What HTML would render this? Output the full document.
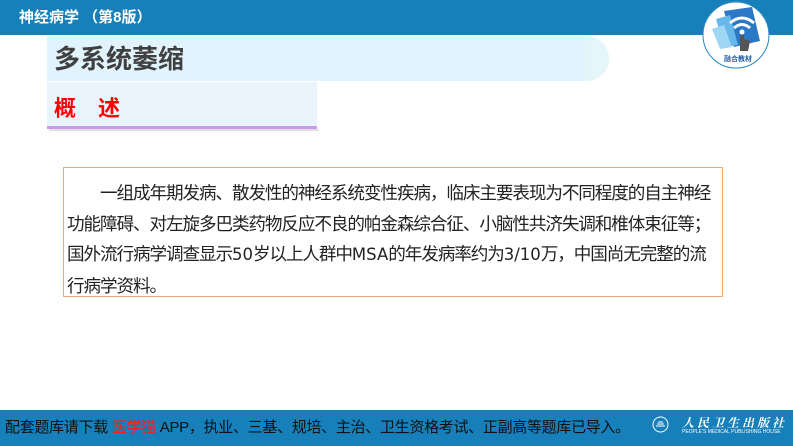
<!DOCTYPE html>
<html><head><meta charset="utf-8"><style>
*{margin:0;padding:0;box-sizing:border-box}
body{width:793px;height:446px;position:relative;background:#fff;overflow:hidden;font-family:"Liberation Sans","Noto Sans CJK SC",sans-serif}
.hdr{position:absolute;left:0;top:0;width:793px;height:35px;background:#177fb9;color:#fff;font-weight:bold;font-size:15px;line-height:35px;padding-left:19px}
.tbar{position:absolute;left:47px;top:36px;width:538px;height:45px;background:#e1f4fd}
.tcap{position:absolute;left:585px;top:36px;width:24px;height:45px;border-radius:0 24px 24px 0;background:#e4f6fa}
.ttl{position:absolute;left:54px;top:38px;font-size:26px;font-weight:bold;color:#404040;line-height:42px}
.sbox{position:absolute;left:47px;top:82px;width:270px;height:44px;background:#eaf4fd}
.sline{position:absolute;left:47px;top:126px;width:270px;height:3px;background:#cc99ee}
.sshadow{position:absolute;left:49px;top:129px;width:270px;height:2px;background:#e0e0e0}
.stt{position:absolute;left:54px;top:94px;font-size:22px;font-weight:bold;color:#ff0000;letter-spacing:22px;line-height:30px}
.box{position:absolute;left:63px;top:167px;width:660px;height:130px;border:1px solid #f2a878}
.txt{position:absolute;left:67px;top:178px;font-size:17.6px;line-height:30.5px;color:#222;white-space:nowrap;letter-spacing:-1.1px}
.txt span{font-family:"DejaVu Sans",sans-serif;font-size:16.5px;letter-spacing:0}
.foot{position:absolute;left:0;top:410px;width:793px;height:36px;background:#177fb9}
.ft{position:absolute;left:5px;top:418px;font-size:15px;color:#111;line-height:20px;letter-spacing:-0.3px}
.ft span{color:#ff1a1a}
.pub{position:absolute;left:682px;top:414px;color:#fff;font-size:12px;font-weight:bold;font-style:italic;letter-spacing:3px;font-family:"Noto Serif CJK SC",serif}
.pube{position:absolute;left:682px;top:429px;color:#fff;font-size:5px;white-space:nowrap}
</style></head><body>
<div class="hdr">神经病学 （第8版）</div>
<svg style="position:absolute;left:702px;top:1px" width="68" height="68" viewBox="0 0 68 68">
<circle cx="34" cy="34" r="33" fill="#fff" stroke="#2a8ac4" stroke-width="1"/>
<polygon points="22,10 50,6 58,40 32,46" fill="#2a78c6"/>
<polygon points="14,18 28,14 36,44 22,46" fill="#66b7ea"/>
<polygon points="10,28 22,24 30,46 18,48" fill="#9fd6f4"/>
<path d="M28 22 Q40 12 52 22" stroke="#fff" stroke-width="3" fill="none"/>
<path d="M32 27 Q40 20 48 27" stroke="#fff" stroke-width="3" fill="none"/>
<circle cx="40" cy="31" r="2.5" fill="#fff"/>
<path d="M38 34 L38 50 L46 50 L48 40 L42 38 L42 34 Z" fill="#555"/>
<text x="22" y="60" font-size="7" font-weight="bold" fill="#1a5fa8" font-family="Noto Sans CJK SC,sans-serif">融合教材</text>
</svg>
<div class="tbar"></div><div class="tcap"></div>
<div class="ttl">多系统萎缩</div>
<div class="sbox"></div><div class="sline"></div><div class="sshadow"></div>
<div class="stt">概述</div>
<div class="box"></div>
<div class="txt">　　一组成年期发病、散发性的神经系统变性疾病，临床主要表现为不同程度的自主神经<br>功能障碍、对左旋多巴类药物反应不良的帕金森综合征、小脑性共济失调和椎体束征等；<br>国外流行病学调查显示<span>50</span>岁以上人群中<span>MSA</span>的年发病率约为<span>3/10</span>万，中国尚无完整的流<br>行病学资料。</div>
<div class="foot"></div>
<div class="ft">配套题库请下载 <span>医学猫</span> APP，执业、三基、规培、主治、卫生资格考试、正副高等题库已导入。</div>
<svg style="position:absolute;left:652px;top:416px" width="17" height="17" viewBox="0 0 17 17"><circle cx="8.5" cy="8.5" r="7.5" fill="none" stroke="#fff" stroke-width="1"/><path d="M4 10 H13 M5 8 H12 M6 6 H11" stroke="#fff" stroke-width="1"/></svg>
<div class="pub">人民卫生出版社</div>
<div class="pube">PEOPLE'S MEDICAL PUBLISHING HOUSE</div>
</body></html>
